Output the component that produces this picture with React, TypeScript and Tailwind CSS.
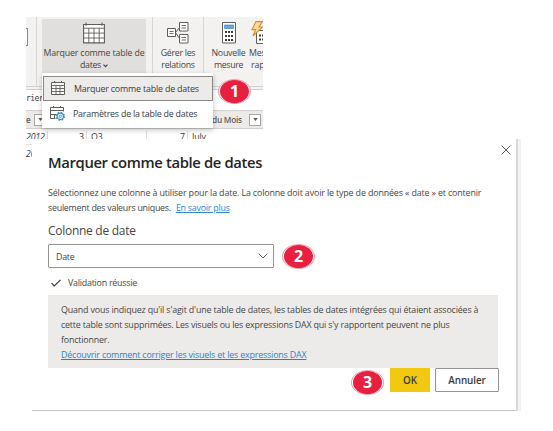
import type { ReactNode } from "react";

function TableIcon() {
  return (
    <svg viewBox="0 0 22 22" className="h-[22px] w-[22px]" fill="none" stroke="#605e5c" strokeWidth="1.1">
      <path d="M.6 2.5h20.8v18.4H.6z" fill="#fff" />
      <path d="M.6 6.2h20.8M.6 11.1h20.8M.6 16h20.8M5.8 6.2v14.7M11 6.2v14.7M16.2 6.2v14.7" strokeWidth=".9" />
      <path d="M3 .5v3.3M19 .5v3.3" />
    </svg>
  );
}

function SmallTableIcon() {
  return (
    <svg viewBox="0 0 15 15" className="h-[15px] w-[15px] shrink-0" fill="none" stroke="#605e5c" strokeWidth="1">
      <path d="M.5 1.5h13v12H.5z" fill="#fff" />
      <path d="M.5 4.5h13M.5 7.5h13M.5 10.5h13M5 4.5v9M9 4.5v9" strokeWidth=".9" />
      <path d="M3.5 0v2M10.5 0v2" />
    </svg>
  );
}

function SettingsTableIcon() {
  return (
    <svg viewBox="0 0 15 15" className="h-[15px] w-[15px] shrink-0" fill="none" stroke="#605e5c" strokeWidth="1">
      <path d="M5.5 12.5h-5v-11h13v4M.5 4.5h13M.5 8.5h6M3.5 2V0M10.5 2V0M4.5 8.5v4" />
      <circle cx="10.3" cy="10.3" r="3.2" stroke="#3a8fc4" strokeWidth="1.1" fill="#eaf4fb" />
      <circle cx="10.3" cy="10.3" r="1.1" stroke="#3a8fc4" strokeWidth=".8" />
      <circle cx="10.3" cy="10.3" r="4.1" stroke="#3a8fc4" strokeWidth="1.1" strokeDasharray="1.6 1.62" />
    </svg>
  );
}

function RelationsIcon() {
  return (
    <svg viewBox="0 0 22 22" className="h-[22px] w-[22px]" fill="none" stroke="#605e5c" strokeWidth="1">
      <path d="M8.5 10.5l4-5M8.5 10.5l4 6" />
      <path d="M.5 6.5h8v8h-8zM12.5.5h8.5v8.5h-8.5zM12.5 12.5h8.5v8.5h-8.5z" fill="#fff" />
      <path d="M2.5 9.5h4M2.5 11.5h4M14.5 3.5h4.5M14.5 6h4.5M14.5 15.5h4.5M14.5 18h4.5" strokeWidth=".9" />
    </svg>
  );
}

function CalculatorIcon() {
  return (
    <svg viewBox="0 0 14 22" className="h-[22px] w-[14px] shrink-0">
      <path d="M.5.5h13v20.5H.5z" fill="#fff" stroke="#605e5c" />
      <path d="M2.5 3h9v3.5h-9z" fill="#5ea9dd" stroke="#2f7fb8" strokeWidth=".6" />
      <path d="M3 10h8M3 14h8M3 18h8" stroke="#3b3a39" strokeWidth="2" strokeDasharray="2 1" />
    </svg>
  );
}

function QuickMeasureIcon() {
  return (
    <svg viewBox="0 0 20 24" className="h-6 w-5 shrink-0">
      <path d="M5.5 9.5h13v13h-13z" fill="#fff" stroke="#605e5c" />
      <path d="M8 14.5h10M8 18.5h10" stroke="#3b3a39" strokeWidth="2" strokeDasharray="2 1" />
      <path d="M5 .6h6.5L8 6h3.5L2 15l2.6-6.4H1z" fill="#fbd9a0" stroke="#dd8a1c" strokeWidth="1.1" />
    </svg>
  );
}

function Badge({ children, className = "" }: { children: ReactNode; className?: string }) {
  return (
    <span className={`flex h-[25px] w-[33px] items-center justify-center rounded-[50%] border border-[#f2a0ac] bg-white ${className}`}>
      <span className="flex h-[23px] w-[29px] shrink-0 items-center justify-center rounded-[50%] bg-[#e81f3f] pb-px text-[16px] leading-none font-bold text-white">
        {children}
      </span>
    </span>
  );
}

function FilterButton() {
  return (
    <span className="flex h-3 w-3 shrink-0 items-center justify-center border border-[#a9a7a5] bg-white">
      <svg viewBox="0 0 6 4" className="h-[3px] w-[5px]"><path d="M0 0h6L3 4z" fill="#605e5c" /></svg>
    </span>
  );
}

function Ribbon() {
  return (
    <div className="flex h-[70px] shrink-0 border-b border-[#d2d0ce] bg-[#f3f2f1] leading-3 text-[#484644]">
      <div className="h-full w-[11px] shrink-0 border-r border-[#d9d7d5] pt-[11px]">
        <div className="h-[18px] w-0.5 border-y border-r border-[#8a8886] bg-white" />
      </div>
      <div className="mt-0.5 ml-[5px] flex h-[54px] w-[104px] shrink-0 flex-col items-center bg-[#e1dfdd] pt-[3px]">
        <TableIcon />
        <div className="mt-[3px] whitespace-nowrap">Marquer comme table de</div>
        <div className="flex items-center gap-[2px]">
          <span className="tracking-[-0.3px]">dates</span>
          <svg viewBox="0 0 5 4" className="mt-px h-1 w-[5px]" fill="none" stroke="#484644" strokeWidth="1.2"><path d="M.5.7l2 2 2-2" /></svg>
        </div>
      </div>
      <div className="ml-[6px] h-full w-[52px] shrink-0 border-x border-[#d9d7d5] pt-[5px]">
        <div className="flex justify-center"><RelationsIcon /></div>
        <div className="mt-[3px] text-center tracking-[-0.28px]">Gérer les<br />relations</div>
      </div>
      <div className="ml-[6px] w-[37px] shrink-0 pt-[5px]">
        <div className="flex justify-center"><CalculatorIcon /></div>
        <div className="mt-[3px] text-center tracking-[-0.25px]">Nouvelle<br /><span className="tracking-[-0.35px]">mesure</span></div>
      </div>
      <div className="w-[36px] shrink-0 pt-1 pl-[2px]">
        <div className="pl-[2px]"><QuickMeasureIcon /></div>
        <div className="mt-[2px] whitespace-nowrap">Mesure<br /><span className="pl-[2px]">rapide</span></div>
      </div>
    </div>
  );
}

function Menu() {
  return (
    <div className="absolute top-[56px] left-[16px] w-[171px] bg-white pt-[3px] pb-[3px] text-[8.9px] tracking-[-0.19px] text-[#3b3a39] shadow-[0_2px_5px_rgba(0,0,0,0.25)]">
      <div className="ml-px flex h-[25px] items-center gap-[8px] border border-[#8a8886] bg-[#edebe9] pl-[7px]">
        <SmallTableIcon />
        <span className="pt-px whitespace-nowrap">Marquer comme table de dates</span>
      </div>
      <div className="flex h-6 items-center gap-[8px] pl-[8px]">
        <SettingsTableIcon />
        <span className="pt-px tracking-[-0.22px] whitespace-nowrap">Paramètres de la table de dates</span>
      </div>
    </div>
  );
}

function Snippet() {
  return (
    <section className="relative ml-[26px] flex h-[122px] w-[237px] shrink-0 flex-col overflow-hidden text-[8.8px] tracking-[-0.15px]">
      <Ribbon />
      <div className="h-[3px] shrink-0 border-b border-[#d2d0ce] bg-[#f3f2f1]" />
      <div className="h-5 shrink-0 bg-white pt-[3px] font-['DejaVu_Sans_Mono',monospace] text-[8px] leading-3 tracking-[-0.6px] text-[#3b3a39]">rier</div>
      <div className="flex h-[19px] shrink-0 items-center border-y border-[#d2d0ce] bg-[#edebe9] font-semibold text-[#605e5c]">
        <span className="w-[8px] shrink-0 text-[8px]">e</span>
        <FilterButton />
        <span className="ml-[166px] w-[37px] shrink-0 pt-px text-[8.3px] tracking-[-0.25px] whitespace-nowrap">du Mois</span>
        <FilterButton />
      </div>
      <div className="flex h-[15px] shrink-0 pt-[2px] leading-3 text-[#3b3a39]">
        <span className="w-[22px] shrink-0 border-r border-[#e1dfdd] italic">2012</span>
        <span className="w-[39px] shrink-0 border-r border-[#e1dfdd] pr-[2px] text-right">3</span>
        <span className="w-[60px] shrink-0 border-r border-[#e1dfdd] pl-1">Q3</span>
        <span className="w-[41px] shrink-0 border-r border-[#e1dfdd] pr-[2px] text-right">7</span>
        <span className="pl-1">July</span>
      </div>
      <Menu />
      <Badge className="absolute top-[62px] left-[192px]">1</Badge>
    </section>
  );
}

function Dialog() {
  return (
    <section className="flex h-[272px] w-[484px] flex-col border-b border-[#c8c6c4] bg-white pl-4 text-[8.9px] leading-[15px] text-[#484644]">
      <div className="flex h-[45px] shrink-0 items-start justify-between pr-[5px]">
        <h1 className="mt-[13px] text-[14.8px] leading-5 font-semibold tracking-[-0.36px] whitespace-nowrap text-[#252423]">Marquer comme table de dates</h1>
        <svg viewBox="0 0 10 10" className="mt-[6px] h-[10px] w-[10px]" stroke="#605e5c" strokeWidth="1"><path d="M.5.5l9 9M9.5.5l-9 9" /></svg>
      </div>
      <p className="pt-px whitespace-nowrap">
        <span className="tracking-[-0.14px]">Sélectionnez une colonne à utiliser pour la date. La colonne doit avoir le type de données « date » et contenir</span>
        <br />
        <span className="tracking-[-0.26px]">seulement des valeurs uniques.</span>
        <a className="ml-[5px] tracking-[-0.24px] text-[#2b88d8] underline">En savoir plus</a>
      </p>
      <h2 className="mt-[8px] h-[21px] text-[12px] tracking-[-0.28px]">Colonne de date</h2>
      <div className="flex h-6 w-[226px] shrink-0 items-center justify-between rounded-[1px] border border-[#979593] pr-[5px] pl-[7px]">
        <span className="pt-px tracking-[-0.3px]">Date</span>
        <svg viewBox="0 0 10 6" className="h-[6px] w-[10px]" fill="none" stroke="#605e5c"><path d="M.7.7L5 5 9.3.7" /></svg>
      </div>
      <div className="mt-[7px] flex h-[15px] items-center gap-[7px] pl-[3px]">
        <svg viewBox="0 0 10 8" className="h-2 w-[10px]" fill="none" stroke="#3b3a39" strokeWidth="1.2"><path d="M.5 4.2l2.8 2.8L9.5.8" /></svg>
        <span className="tracking-[-0.24px]">Validation réussie</span>
      </div>
      <div className="mt-[5px] h-[73px] w-[450px] shrink-0 bg-[#edebe9] pt-[7px] pl-[13px] whitespace-nowrap">
        <p className="tracking-[-0.16px]">Quand vous indiquez qu'il s'agit d'une table de dates, les tables de dates intégrées qui étaient associées à</p>
        <p className="tracking-[-0.18px]">cette table sont supprimées. Les visuels ou les expressions DAX qui s'y rapportent peuvent ne plus</p>
        <p className="tracking-[-0.18px]">fonctionner.</p>
        <a className="block tracking-[-0.18px] text-[#2b7fd0] underline">Découvrir comment corriger les visuels et les expressions DAX</a>
      </div>
      <div className="flex h-6 w-[451px] items-stretch justify-end text-[9.9px] font-semibold tracking-[-0.1px] text-[#3b3a39]">
        <Badge className="mt-[2px] mr-[6px]">3</Badge>
        <button className="w-10 bg-[#f2c811] pt-px">OK</button>
        <button className="ml-[5px] w-16 rounded-[1px] border border-[#979593] pt-px">Annuler</button>
      </div>
    </section>
  );
}

export default function App() {
  return (
    <main className="relative h-[431px] w-[553px] overflow-hidden bg-white pt-[17px] font-['Open_Sans','Noto_Sans',sans-serif]">
      <Snippet />
      <div className="flex">
        <div className="ml-[26px] w-[6px] shrink-0 overflow-hidden text-[8.5px] leading-3 text-[#3b3a39] italic">
          <div className="mt-[5px] border-t border-[#e1dfdd] pt-[3px]">20</div>
        </div>
        <Dialog />
        <div className="h-[272px] w-[5px] border-l-2 border-[#dcdad8] bg-[#f3f2f1]" />
      </div>
      <Badge className="absolute top-[244px] left-[282px]">2</Badge>
    </main>
  );
}
